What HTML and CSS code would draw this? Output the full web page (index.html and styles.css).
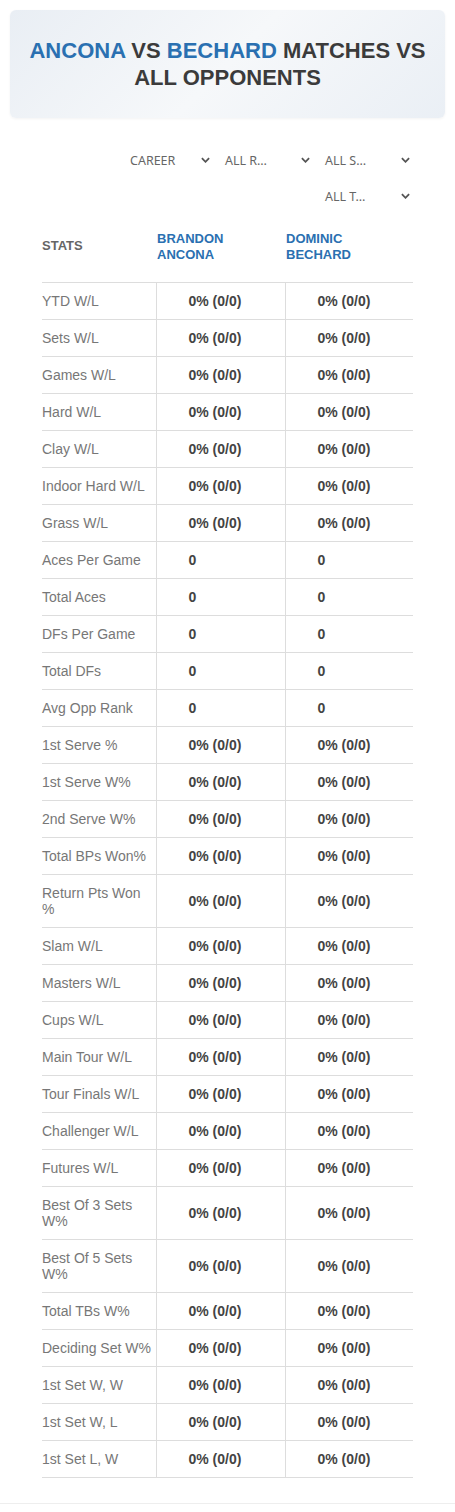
FILE: index.html
```html
<!DOCTYPE html>
<html lang="en">
<head>
  <meta charset="UTF-8">
  <meta name="viewport" content="width=device-width, initial-scale=1.0">
  <title>Ancona vs Bechard - Matches vs All Opponents</title>
  <link rel="stylesheet" href="styles.css">
</head>
<body>
  <div class="page">
    <div class="title-card">
      <h1><span class="blue">ANCONA</span> VS <span class="blue">BECHARD</span> MATCHES VS ALL OPPONENTS</h1>
    </div>

    <div class="section">
      <div class="filters">
        <div class="select"><span>CAREER</span><svg viewBox="0 0 10 6"><path d="M1 1l4 4 4-4"/></svg></div>
        <div class="select"><span>ALL R…</span><svg viewBox="0 0 10 6"><path d="M1 1l4 4 4-4"/></svg></div>
        <div class="select"><span>ALL S…</span><svg viewBox="0 0 10 6"><path d="M1 1l4 4 4-4"/></svg></div>
        <div class="select"><span>ALL T…</span><svg viewBox="0 0 10 6"><path d="M1 1l4 4 4-4"/></svg></div>
      </div>

      <table class="stats">
        <colgroup>
          <col class="c-label">
          <col class="c-val">
          <col class="c-val2">
        </colgroup>
        <thead>
          <tr>
            <th class="label-col">STATS</th>
            <th class="name">BRANDON<br>ANCONA</th>
            <th class="name">DOMINIC<br>BECHARD</th>
          </tr>
        </thead>
        <tbody id="rows"></tbody>
      </table>
    </div>
  </div>

  <script>
    const rows = [
      ["YTD W/L", "0% (0/0)"], ["Sets W/L", "0% (0/0)"], ["Games W/L", "0% (0/0)"],
      ["Hard W/L", "0% (0/0)"], ["Clay W/L", "0% (0/0)"], ["Indoor Hard W/L", "0% (0/0)"],
      ["Grass W/L", "0% (0/0)"], ["Aces Per Game", "0"], ["Total Aces", "0"],
      ["DFs Per Game", "0"], ["Total DFs", "0"], ["Avg Opp Rank", "0"],
      ["1st Serve %", "0% (0/0)"], ["1st Serve W%", "0% (0/0)"], ["2nd Serve W%", "0% (0/0)"],
      ["Total BPs Won%", "0% (0/0)"], ["Return Pts Won %", "0% (0/0)"], ["Slam W/L", "0% (0/0)"],
      ["Masters W/L", "0% (0/0)"], ["Cups W/L", "0% (0/0)"], ["Main Tour W/L", "0% (0/0)"],
      ["Tour Finals W/L", "0% (0/0)"], ["Challenger W/L", "0% (0/0)"], ["Futures W/L", "0% (0/0)"],
      ["Best Of 3 Sets W%", "0% (0/0)"], ["Best Of 5 Sets W%", "0% (0/0)"], ["Total TBs W%", "0% (0/0)"],
      ["Deciding Set W%", "0% (0/0)"], ["1st Set W, W", "0% (0/0)"], ["1st Set W, L", "0% (0/0)"],
      ["1st Set L, W", "0% (0/0)"]
    ];
    const body = document.getElementById("rows");
    rows.forEach(function (r) {
      const tr = document.createElement("tr");
      tr.innerHTML = '<td class="label-col">' + r[0] + '</td><td class="val">' + r[1] + '</td><td class="val">' + r[1] + '</td>';
      body.appendChild(tr);
    });
  </script>
</body>
</html>
```

FILE: styles.css
```css
body { margin: 0; background: #fff; font-family: "Liberation Sans", Arial, sans-serif; }
.page { padding: 10px 10px 0; }
.title-card { background: linear-gradient(135deg, #e9eef4 0%, #f6f8fa 50%, #eaeff5 100%); border-radius: 6px; box-shadow: 0 1px 3px rgba(0, 0, 0, 0.05); padding: 27px 12px 27px; }
.title-card h1 { margin: 0; text-align: center; font-family: "Liberation Sans", Arial, sans-serif; font-size: 22px; line-height: 27px; font-weight: bold; color: #3b3b3b; }
.blue { color: #2a70b1; }
.section { margin: 0 -10px; padding: 24px 42px 25px; border-bottom: 1px solid #eee; }
.filters { display: flex; flex-wrap: wrap; justify-content: flex-end; gap: 0 5px; }
.select { width: 95px; height: 36px; display: flex; align-items: center; justify-content: space-between; padding: 0 3px 0 7px; box-sizing: border-box; font-family: "Noto Sans", "Open Sans", sans-serif; font-size: 12.5px; color: #666; }
.select:first-child { width: 90px; }
.select svg { width: 9px; height: 6px; fill: none; stroke: #555; stroke-width: 2; }
.stats { width: 100%; table-layout: fixed; border-collapse: collapse; margin-top: 4px; }
.c-label { width: 114px; }
.c-val { width: 129px; }
.stats th { text-align: left; font-size: 13px; line-height: 16px; font-weight: bold; vertical-align: top; padding: 13px 0 19px; }
.stats th.label-col { color: #666; padding-top: 20px; }
.stats th.name { color: #2a70b1; padding-left: 1px; }
.stats td { border-top: 1px solid #ddd; font-size: 14px; line-height: 16px; padding: 10px 0; }
.stats tr:last-child td { border-bottom: 1px solid #ddd; }
.stats td.label-col { color: #777; padding-right: 4px; }
.stats td.val { font-weight: bold; color: #444; padding-left: 32px; border-left: 1px solid #ddd; }
```
